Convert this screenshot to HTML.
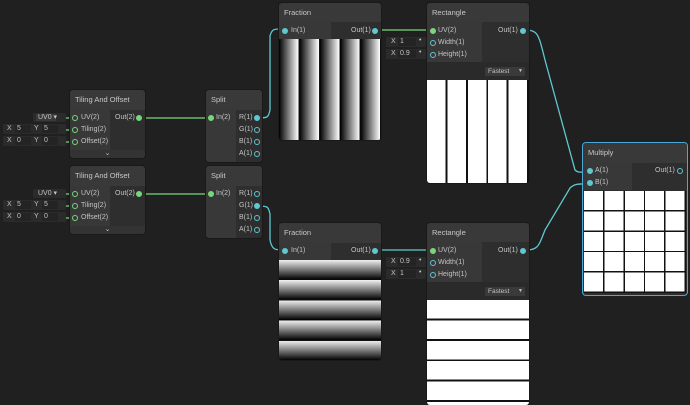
<!DOCTYPE html><html><head><style>
body{margin:0;width:690px;height:402px;background:#202020;overflow:hidden;position:relative;font-family:"Liberation Sans",sans-serif;color:#c4c4c4;font-size:7px}
.a{position:absolute}
.node{position:absolute;background:#2e2e2e;border-radius:3px;overflow:hidden;box-shadow:0 0 0 1px #191919}
.hd{position:absolute;left:0;right:0;top:0;background:#393939;font-size:7.5px;padding-left:5px;box-sizing:border-box;color:#c8c8c8}
.pl{position:absolute;left:0;background:#383838}
.pr{position:absolute;right:0;background:#2f2f2f}
.t{position:absolute;white-space:nowrap}
.dot{position:absolute;width:4px;height:4px;border-radius:50%;border:1px solid #5fc8d0}
.df{background:#5fc8d0}
.dg{border-color:#7ad67a}.dg.df{background:#7ad67a}
.fld{position:absolute;background:#2b2b2b;height:10px;border-radius:1px}
.in{position:absolute;background:#242424;height:8px;top:1px}
</style></head><body>
<svg class="a" width="690" height="402" style="left:0;top:0" fill="none" stroke-width="1.3">
<g stroke="#7ad67a">
<path d="M63 118H75M63 130H75M63 142H75M63 194H75M63 206H75M63 218H75M139 118H210M139 194H210"/>
<path d="M381 30H433"/>
</g>
<g stroke="#5fc8d0">
<path d="M256 118C268 118 268 118 270 110V36C272 28 275 29 284 29"/>
<path d="M256 206C268 206 268 206 270 214V240C272 250 275 250 284 250"/>
<path d="M381 250H433"/>
<path d="M432 42H433M432 55H433M432 262H433M432 274H433"/>
<path d="M523 30C538 30 538 32 545 60L575 170C578 173 580 172 590 172"/>
<path d="M523 250C538 250 538 248 545 230L570 188C575 183 580 184 590 184"/>
</g>
</svg>

<!-- left inputs -->
<div class="fld" style="left:33px;top:113px;width:33px;height:9px"><div class="in" style="left:3px;top:1px;width:20px;height:7px;background:#3a3a3a"></div><span class="t" style="left:5px;top:0">UV0 ▾</span></div>
<div class="fld" style="left:3px;top:124px;width:63px"><span class="t" style="left:4px;top:1px">X</span><div class="in" style="left:12px;width:16px"></div><span class="t" style="left:14px;top:1px">5</span><span class="t" style="left:31px;top:1px">Y</span><div class="in" style="left:39px;width:16px"></div><span class="t" style="left:41px;top:1px">5</span></div>
<div class="fld" style="left:3px;top:136px;width:63px"><span class="t" style="left:4px;top:1px">X</span><div class="in" style="left:12px;width:16px"></div><span class="t" style="left:14px;top:1px">0</span><span class="t" style="left:31px;top:1px">Y</span><div class="in" style="left:39px;width:16px"></div><span class="t" style="left:41px;top:1px">0</span></div>
<div class="fld" style="left:33px;top:189px;width:33px;height:9px"><span class="t" style="left:5px;top:0">UV0 ▾</span></div>
<div class="fld" style="left:3px;top:200px;width:63px"><span class="t" style="left:4px;top:1px">X</span><div class="in" style="left:12px;width:16px"></div><span class="t" style="left:14px;top:1px">5</span><span class="t" style="left:31px;top:1px">Y</span><div class="in" style="left:39px;width:16px"></div><span class="t" style="left:41px;top:1px">5</span></div>
<div class="fld" style="left:3px;top:212px;width:63px"><span class="t" style="left:4px;top:1px">X</span><div class="in" style="left:12px;width:16px"></div><span class="t" style="left:14px;top:1px">0</span><span class="t" style="left:31px;top:1px">Y</span><div class="in" style="left:39px;width:16px"></div><span class="t" style="left:41px;top:1px">0</span></div>

<!-- Tiling 1 -->
<div class="node" style="left:70px;top:90px;width:75px;height:68px">
<div class="hd" style="height:20px;line-height:20px">Tiling And Offset</div>
<div class="pl" style="top:20px;width:40px;height:40px"></div>
<div class="dot dg" style="left:2px;top:25px"></div><span class="t" style="left:11px;top:24px">UV(2)</span>
<div class="dot dg" style="left:2px;top:37px"></div><span class="t" style="left:11px;top:36px">Tiling(2)</span>
<div class="dot dg" style="left:2px;top:49px"></div><span class="t" style="left:11px;top:48px">Offset(2)</span>
<span class="t" style="left:45px;top:24px">Out(2)</span><div class="dot dg df" style="left:66px;top:25px"></div>
<div class="a" style="top:60px;left:0;right:0;height:8px;background:#333;text-align:center;font-size:7px;line-height:8px">⌄</div>
</div>
<!-- Tiling 2 -->
<div class="node" style="left:70px;top:166px;width:75px;height:68px">
<div class="hd" style="height:20px;line-height:20px">Tiling And Offset</div>
<div class="pl" style="top:20px;width:40px;height:40px"></div>
<div class="dot dg" style="left:2px;top:25px"></div><span class="t" style="left:11px;top:24px">UV(2)</span>
<div class="dot dg" style="left:2px;top:37px"></div><span class="t" style="left:11px;top:36px">Tiling(2)</span>
<div class="dot dg" style="left:2px;top:49px"></div><span class="t" style="left:11px;top:48px">Offset(2)</span>
<span class="t" style="left:45px;top:24px">Out(2)</span><div class="dot dg df" style="left:66px;top:25px"></div>
<div class="a" style="top:60px;left:0;right:0;height:8px;background:#333;text-align:center;font-size:7px;line-height:8px">⌄</div>
</div>
<!-- Split 1 -->
<div class="node" style="left:206px;top:90px;width:56px;height:72px">
<div class="hd" style="height:20px;line-height:20px">Split</div>
<div class="pl" style="top:20px;width:30px;height:52px"></div>
<div class="dot dg df" style="left:2px;top:25px"></div><span class="t" style="left:10px;top:24px">In(2)</span>
<span class="t" style="left:33px;top:24px">R(1)</span><div class="dot df" style="left:48px;top:25px"></div>
<span class="t" style="left:33px;top:36px">G(1)</span><div class="dot" style="left:48px;top:37px"></div>
<span class="t" style="left:33px;top:48px">B(1)</span><div class="dot" style="left:48px;top:49px"></div>
<span class="t" style="left:33px;top:60px">A(1)</span><div class="dot" style="left:48px;top:61px"></div>
</div>
<!-- Split 2 -->
<div class="node" style="left:206px;top:166px;width:56px;height:72px">
<div class="hd" style="height:20px;line-height:20px">Split</div>
<div class="pl" style="top:20px;width:30px;height:52px"></div>
<div class="dot dg df" style="left:2px;top:25px"></div><span class="t" style="left:10px;top:24px">In(2)</span>
<span class="t" style="left:33px;top:24px">R(1)</span><div class="dot" style="left:48px;top:25px"></div>
<span class="t" style="left:33px;top:36px">G(1)</span><div class="dot df" style="left:48px;top:37px"></div>
<span class="t" style="left:33px;top:48px">B(1)</span><div class="dot" style="left:48px;top:49px"></div>
<span class="t" style="left:33px;top:60px">A(1)</span><div class="dot" style="left:48px;top:61px"></div>
</div>
<!-- Fraction top -->
<div class="node" style="left:279px;top:3px;width:102px;height:137px">
<div class="hd" style="height:19px;line-height:19px">Fraction</div>
<div class="pl" style="top:19px;width:52px;height:17px"></div>
<div class="dot df" style="left:3px;top:25px"></div><span class="t" style="left:12px;top:24px">In(1)</span>
<span class="t" style="left:72px;top:24px">Out(1)</span><div class="dot df" style="left:93px;top:25px"></div>
<div class="a" style="top:36px;left:0;width:102px;height:101px;background:repeating-linear-gradient(90deg,#000 0,#fff 19.5px,#111 19.5px,#111 20.4px)"></div>
</div>
<!-- Fraction bottom -->
<div class="node" style="left:279px;top:223px;width:102px;height:137px">
<div class="hd" style="height:20px;line-height:20px">Fraction</div>
<div class="pl" style="top:20px;width:52px;height:17px"></div>
<div class="dot df" style="left:3px;top:25px"></div><span class="t" style="left:12px;top:24px">In(1)</span>
<span class="t" style="left:72px;top:24px">Out(1)</span><div class="dot df" style="left:93px;top:25px"></div>
<div class="a" style="top:37px;left:0;width:102px;height:100px;background:repeating-linear-gradient(180deg,#f0f0f0 0,#000 19.5px,#111 19.5px,#111 20.2px)"></div>
</div>
<!-- rect inputs -->
<div class="fld" style="left:386px;top:37px;width:40px"><span class="t" style="left:5px;top:1px">X</span><div class="in" style="left:12px;width:18px"></div><span class="t" style="left:14px;top:1px">1</span><span class="t" style="left:33px;top:0">•</span></div>
<div class="fld" style="left:386px;top:49px;width:40px"><span class="t" style="left:5px;top:1px">X</span><div class="in" style="left:12px;width:18px"></div><span class="t" style="left:14px;top:1px">0.9</span><span class="t" style="left:33px;top:0">•</span></div>
<div class="fld" style="left:386px;top:257px;width:40px"><span class="t" style="left:5px;top:1px">X</span><div class="in" style="left:12px;width:18px"></div><span class="t" style="left:14px;top:1px">0.9</span><span class="t" style="left:33px;top:0">•</span></div>
<div class="fld" style="left:386px;top:269px;width:40px"><span class="t" style="left:5px;top:1px">X</span><div class="in" style="left:12px;width:18px"></div><span class="t" style="left:14px;top:1px">1</span><span class="t" style="left:33px;top:0">•</span></div>
<!-- Rect top -->
<div class="node" style="left:427px;top:3px;width:102px;height:180px">
<div class="hd" style="height:19px;line-height:19px">Rectangle</div>
<div class="pl" style="top:19px;width:55px;height:40px"></div>
<div class="dot dg df" style="left:3px;top:25px"></div><span class="t" style="left:11px;top:24px">UV(2)</span>
<div class="dot" style="left:3px;top:37px"></div><span class="t" style="left:11px;top:36px">Width(1)</span>
<div class="dot" style="left:3px;top:49px"></div><span class="t" style="left:11px;top:48px">Height(1)</span>
<span class="t" style="left:71px;top:24px">Out(1)</span><div class="dot df" style="left:93px;top:25px"></div>
<div class="a" style="top:59px;left:0;right:0;height:18px;background:#2a2a2a"></div>
<div class="a" style="top:64px;left:58px;width:40px;height:9px;background:#3a3a3a;border-radius:1px"><span class="t" style="left:3px;top:1px;font-size:6.5px">Fastest</span><span class="t" style="left:33px;top:1px;font-size:5px">▼</span></div>
<div class="a" style="top:77px;left:0;width:102px;height:103px;background:repeating-linear-gradient(90deg,#fff 0,#fff 18.5px,#111 18.5px,#111 20.4px)"></div>
</div>
<!-- Rect bottom -->
<div class="node" style="left:427px;top:223px;width:102px;height:182px">
<div class="hd" style="height:19px;line-height:19px">Rectangle</div>
<div class="pl" style="top:19px;width:55px;height:40px"></div>
<div class="dot dg df" style="left:3px;top:25px"></div><span class="t" style="left:11px;top:24px">UV(2)</span>
<div class="dot" style="left:3px;top:37px"></div><span class="t" style="left:11px;top:36px">Width(1)</span>
<div class="dot" style="left:3px;top:49px"></div><span class="t" style="left:11px;top:48px">Height(1)</span>
<span class="t" style="left:71px;top:24px">Out(1)</span><div class="dot df" style="left:93px;top:25px"></div>
<div class="a" style="top:59px;left:0;right:0;height:18px;background:#2a2a2a"></div>
<div class="a" style="top:64px;left:58px;width:40px;height:9px;background:#3a3a3a;border-radius:1px"><span class="t" style="left:3px;top:1px;font-size:6.5px">Fastest</span><span class="t" style="left:33px;top:1px;font-size:5px">▼</span></div>
<div class="a" style="top:77px;left:0;width:102px;height:105px;background:repeating-linear-gradient(180deg,#fff 0,#fff 18.5px,#111 18.5px,#111 20.4px)"></div>
</div>
<!-- Multiply -->
<div class="node" style="left:583px;top:143px;width:104px;height:152px;box-shadow:0 0 0 1px #4aa8d8;background:#2e2e2e">
<div class="hd" style="height:20px;line-height:20px">Multiply</div>
<div class="pl" style="top:20px;width:49px;height:27px"></div>
<div class="dot df" style="left:4px;top:25px"></div><span class="t" style="left:12px;top:24px">A(1)</span>
<div class="dot df" style="left:4px;top:37px"></div><span class="t" style="left:12px;top:36px">B(1)</span>
<span class="t" style="left:72px;top:24px">Out(1)</span><div class="dot" style="left:94px;top:25px"></div>
<div class="a" style="top:48px;left:1px;width:102px;height:102px;background:#111;background-image:repeating-linear-gradient(90deg,transparent 0,transparent 19px,#111 19px,#111 20.4px),repeating-linear-gradient(180deg,#fff 0,#fff 19px,#111 19px,#111 20.4px)"></div>
</div>
</body></html>
